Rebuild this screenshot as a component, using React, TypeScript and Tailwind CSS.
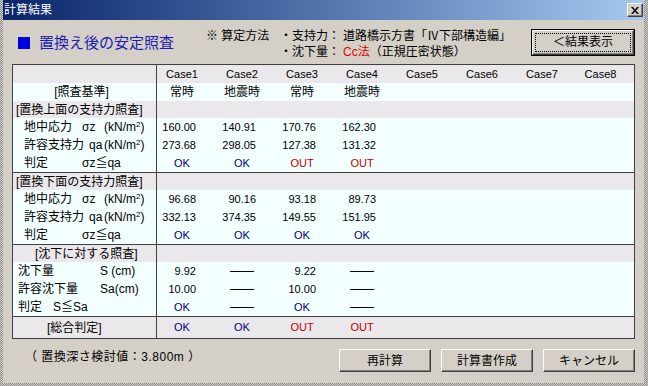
import React from "react";

const FONT = "font-['Liberation_Sans','Noto_Sans_CJK_JP',sans-serif]";

function ValueCell({ v, last }: { v: string; last: boolean }) {
  const w = last ? "w-[57px]" : "w-[60px]";
  if (/^[0-9]/.test(v)) {
    return <div className={`${w} shrink-0 flex items-center justify-end pr-[21px] text-[11px]`}>{v}</div>;
  }
  const color = v === "OK" ? "text-[#000080]" : v === "OUT" ? "text-[#c00000]" : "text-black";
  const size = /^[A-Za-z]/.test(v) ? "text-[11px]" : "text-[12px]";
  return (
    <div className={`${w} shrink-0 flex items-center justify-center pr-[10px] ${color} ${size}`}>{v}</div>
  );
}

function Row({
  h,
  bg,
  line,
  label,
  vals = [],
}: {
  h: string;
  bg: string;
  line?: boolean;
  label?: React.ReactNode;
  vals?: string[];
}) {
  return (
    <div className={`flex ${h} ${bg} ${line ? "border-b border-[#404040]" : ""}`}>
      <div className="w-[144px] shrink-0 border-r border-[#404040] flex items-center text-[12px]">{label}</div>
      {Array.from({ length: 8 }).map((_, i) => (
        <ValueCell key={i} v={vals[i] ?? ""} last={i === 7} />
      ))}
    </div>
  );
}

const kNm2 = (
  <span className="w-[44px] shrink-0 whitespace-nowrap leading-none">
    (kN/m<sup className="text-[8px] leading-none">2</sup>)
  </span>
);

function StressLabel({ name, sym, w }: { name: string; sym: string; w: string }) {
  return (
    <div className="flex w-full items-center pl-[11px] pr-[8px]">
      <span className={`${w} shrink-0`}>{name}</span>
      <span className="flex-1">{sym}</span>
      {kNm2}
    </div>
  );
}

function JudgeLabel({ pad, w, text }: { pad: string; w: string; text: string }) {
  return (
    <div className={`flex items-center ${pad}`}>
      <span className={`${w} shrink-0`}>判定</span>
      <span>{text}</span>
    </div>
  );
}

function WinButton({ label }: { label: string }) {
  return (
    <button className="h-[23px] w-[92px] bg-[#d4d0c8] border border-t-white border-l-white border-r-[#404040] border-b-[#404040] shadow-[inset_-1px_-1px_0_#808080] text-[12px] text-black">
      {label}
    </button>
  );
}

export default function App() {
  const dataBg = "bg-[#f3ffff]";
  const secBg = "bg-[#ebe8eb]";

  return (
    <div
      className={`w-[648px] h-[386px] pl-[3px] pr-[4px] pb-[3px] bg-[repeating-conic-gradient(#8c8c8c_0_25%,#d4d0c8_0_50%)] bg-[length:2px_2px] ${FONT}`}
    >
      <div className="h-full flex flex-col bg-[#d4d0c8]">
        {/* title bar */}
        <div className="h-[20px] shrink-0 flex items-center bg-gradient-to-r from-[#0a246a] to-[#a6caf0] pl-px pr-[1px]">
          <span className="text-white text-[12px] leading-none">計算結果</span>
          <div className="ml-auto w-[16px] h-[14px] bg-[#d4d0c8] border border-t-white border-l-white border-r-[#404040] border-b-[#404040] shadow-[inset_-1px_-1px_0_#808080] flex items-center justify-center">
            <svg width="8" height="7" viewBox="0 0 8 7">
              <path d="M0 0h2l2 2.5L6 0h2L5 3.5 8 7H6L4 4.5 2 7H0l3-3.5z" fill="#000" />
            </svg>
          </div>
        </div>

        {/* header */}
        <div className="h-[44px] shrink-0 flex items-center pl-[15px] pr-[9px]">
          <div className="w-[188px] flex items-center">
            <span className="w-[12px] h-[12px] bg-[#0000e0] mr-[9px] mt-[1px]" />
            <span className="text-[15px] text-[#1c1cb0] leading-none">置換え後の安定照査</span>
          </div>
          <div className="grid grid-cols-[74px_63px_auto] text-[12px] leading-[16px] text-black mt-[4px]">
            <span>※ 算定方法</span>
            <span>・支持力：</span>
            <span>道路橋示方書「Ⅳ下部構造編」</span>
            <span />
            <span>・沈下量：</span>
            <span>
              <span className="text-[#e00000]">Cc法</span>（正規圧密状態）
            </span>
          </div>
          <div className="ml-auto w-[104px] h-[27px] border border-black">
            <div className="h-full w-full border border-t-white border-l-white border-r-[#404040] border-b-[#404040] shadow-[inset_-1px_-1px_0_#808080] p-[2px]">
              <div className="h-full w-full border border-dotted border-black flex items-center justify-center text-[12px]">
                ＜結果表示
              </div>
            </div>
          </div>
        </div>

        {/* table */}
        <div className="ml-[9px] w-[623px] h-[275px] border border-[#404040] flex flex-col text-black">
          <Row h="h-[18px]" bg={secBg} vals={["Case1", "Case2", "Case3", "Case4", "Case5", "Case6", "Case7", "Case8"]} />
          <Row
            h="h-[18px]"
            bg={dataBg}
            label={<div className="w-full text-center pr-[6px]">[照査基準]</div>}
            vals={["常時", "地震時", "常時", "地震時"]}
          />
          <Row h="h-[17px]" bg={secBg} label={<div className="pl-[3px]">[置換上面の支持力照査]</div>} />
          <Row h="h-[18px]" bg={dataBg} label={<StressLabel name="地中応力" sym="σz" w="w-[58px]" />} vals={["160.00", "140.91", "170.76", "162.30"]} />
          <Row h="h-[18px]" bg={dataBg} label={<StressLabel name="許容支持力" sym="qa" w="w-[65px]" />} vals={["273.68", "298.05", "127.38", "131.32"]} />
          <Row
            h="h-[19px]"
            bg={dataBg}
            line
            label={<JudgeLabel pad="pl-[11px]" w="w-[58px]" text="σz≦qa" />}
            vals={["OK", "OK", "OUT", "OUT"]}
          />
          <Row h="h-[17px]" bg={secBg} label={<div className="pl-[3px]">[置換下面の支持力照査]</div>} />
          <Row h="h-[18px]" bg={dataBg} label={<StressLabel name="地中応力" sym="σz" w="w-[58px]" />} vals={["96.68", "90.16", "93.18", "89.73"]} />
          <Row h="h-[18px]" bg={dataBg} label={<StressLabel name="許容支持力" sym="qa" w="w-[65px]" />} vals={["332.13", "374.35", "149.55", "151.95"]} />
          <Row
            h="h-[19px]"
            bg={dataBg}
            line
            label={<JudgeLabel pad="pl-[11px]" w="w-[58px]" text="σz≦qa" />}
            vals={["OK", "OK", "OK", "OK"]}
          />
          <Row h="h-[17px]" bg={secBg} label={<div className="pl-[22px]">[沈下に対する照査]</div>} />
          <Row
            h="h-[18px]"
            bg={dataBg}
            label={
              <div className="flex pl-[5px]">
                <span className="w-[82px] shrink-0">沈下量</span>
                <span>S (cm)</span>
              </div>
            }
            vals={["9.92", "――", "9.22", "――"]}
          />
          <Row
            h="h-[18px]"
            bg={dataBg}
            label={
              <div className="flex pl-[5px]">
                <span className="w-[82px] shrink-0">許容沈下量</span>
                <span>Sa(cm)</span>
              </div>
            }
            vals={["10.00", "――", "10.00", "――"]}
          />
          <Row
            h="h-[19px]"
            bg={dataBg}
            line
            label={<JudgeLabel pad="pl-[5px]" w="w-[35px]" text="S≦Sa" />}
            vals={["OK", "――", "OK", "――"]}
          />
          <Row
            h="h-[21px]"
            bg={secBg}
            label={<div className="pl-[34px]">[総合判定]</div>}
            vals={["OK", "OK", "OUT", "OUT"]}
          />
        </div>

        {/* footer */}
        <div className="flex items-start pt-[10px] pl-[22px]">
          <span className="text-[12px] leading-[16px] tracking-[0.5px]">（ 置換深さ検討値：3.800m ）</span>
          <div className="ml-auto flex gap-[10px] pr-[9px]">
            <WinButton label="再計算" />
            <WinButton label="計算書作成" />
            <WinButton label="キャンセル" />
          </div>
        </div>
      </div>
    </div>
  );
}
